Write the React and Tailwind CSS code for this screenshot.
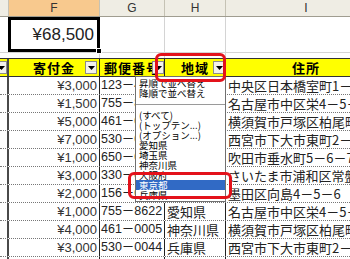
import React from "react";

// Excel-style donation sheet with an autofilter dropdown open on 地域
const rows = [
  { amount: "¥3,000", zip: "123－4567", pref: "東京都", addr: "中央区日本橋室町1－2－3" },
  { amount: "¥1,500", zip: "755－8622", pref: "愛知県", addr: "名古屋市中区栄4－5－6" },
  { amount: "¥5,000", zip: "461－0005", pref: "神奈川県", addr: "横須賀市戸塚区柏尾町" },
  { amount: "¥7,000", zip: "530－0044", pref: "兵庫県", addr: "西宮市下大市東町2－3" },
  { amount: "¥1,000", zip: "650－0012", pref: "大阪府", addr: "吹田市垂水町5－6－7" },
  { amount: "¥3,000", zip: "330－0046", pref: "埼玉県", addr: "さいたま市浦和区常盤" },
  { amount: "¥2,000", zip: "156－0034", pref: "東京都", addr: "墨田区向島4－5－6" },
  { amount: "¥1,000", zip: "755－8622", pref: "愛知県", addr: "名古屋市中区栄4－5－6" },
  { amount: "¥4,000", zip: "461－0005", pref: "神奈川県", addr: "横須賀市戸塚区柏尾町" },
  { amount: "¥3,000", zip: "530－0044", pref: "兵庫県", addr: "西宮市下大市東町2－3" },
];

const filterItems = [
  "(すべて)",
  "(トップテン...)",
  "(オプション...)",
  "愛知県",
  "埼玉県",
  "神奈川県",
  "大阪府",
  "東京都",
  "兵庫県",
];

const Arrow = () => (
  <svg width="7" height="4" viewBox="0 0 7 4">
    <path d="M0 0h7L3.5 4z" fill="#000" />
  </svg>
);

const FilterButton = ({ className = "" }) => (
  <div
    className={
      "absolute top-[2px] h-[13px] w-[12px] flex items-center justify-center bg-[#f3f2ec] border border-[#8c8c8c] " +
      className
    }
  >
    <Arrow />
  </div>
);

const App = () => {
  return (
    <div className="relative w-[350px] h-[259px] overflow-hidden bg-white text-[#222] font-['Liberation_Sans','Noto_Sans_CJK_JP',sans-serif]">
      {/* column letters */}
      <div className="flex h-[17px] border-b border-[#a09d90] bg-[#efede4] text-[12px] leading-[16px] text-[#333]">
        <div className="w-[9px] shrink-0 border-r border-[#c5c2b4]" />
        <div className="w-[91px] shrink-0 border-r border-[#c5c2b4] bg-[#f8c98e] text-center">F</div>
        <div className="w-[65px] shrink-0 border-r border-[#c5c2b4] text-center">G</div>
        <div className="w-[61px] shrink-0 border-r border-[#c5c2b4] text-center">H</div>
        <div className="w-[160px] shrink-0 text-center">I</div>
      </div>

      {/* total row */}
      <div className="flex h-[36px] border-b border-[#d4d4d4]">
        <div className="w-[8px] shrink-0" />
        <div className="relative w-[92px] shrink-0 flex items-center justify-end pr-[3px] border-[3px] border-black text-[17px] text-[#222]">
          ¥68,500
          <div className="absolute -right-[5px] -bottom-[5px] w-[6px] h-[6px] bg-black border border-white" />
        </div>
        <div className="w-[65px] shrink-0 border-r border-[#d4d4d4]" />
        <div className="w-[61px] shrink-0 border-r border-[#d4d4d4]" />
        <div className="w-[160px] shrink-0" />
      </div>

      {/* spacer row */}
      <div className="flex h-[5px]">
        <div className="w-[9px] shrink-0" />
        <div className="w-[91px] shrink-0 border-r border-[#d4d4d4]" />
        <div className="w-[65px] shrink-0 border-r border-[#d4d4d4]" />
        <div className="w-[61px] shrink-0 border-r border-[#d4d4d4]" />
      </div>

      {/* yellow header row */}
      <div className="flex h-[19px] border-y border-[#333] bg-[#ffff00] text-[13px] leading-[17px] font-bold text-black font-['Noto_Sans_CJK_JP',sans-serif]">
        <div className="relative w-[9px] shrink-0 overflow-hidden border-r-2 border-[#4a4a4a]">
          <FilterButton className="right-[0px]" />
        </div>
        <div className="relative w-[91px] shrink-0 border-r border-[#222] text-center tracking-[1px]">
          寄付金
          <FilterButton className="right-[2px]" />
        </div>
        <div className="relative w-[65px] shrink-0 border-r border-[#222] text-center tracking-[1px] whitespace-nowrap overflow-hidden">
          郵便番号
          <FilterButton className="right-[0px]" />
        </div>
        <div className="relative w-[61px] shrink-0 border-r border-[#222] text-center tracking-[1px]">
          地域
          <FilterButton className="right-[0px]" />
        </div>
        <div className="w-[160px] shrink-0 text-center tracking-[1px]">住所</div>
      </div>

      {/* data rows */}
      {[...rows, null].map((r, i) => (
        <div
          key={i}
          className="flex h-[18px] border-b border-dotted border-[#777] text-[13px] leading-[17px] whitespace-nowrap"
        >
          <div className="w-[9px] shrink-0 border-r-2 border-[#4a4a4a]" />
          <div className="w-[91px] shrink-0 border-r border-[#222] text-right pr-[2px] text-[#333]">
            {r && r.amount}
          </div>
          <div className="w-[65px] shrink-0 overflow-hidden border-r border-[#222] pl-[1px] text-[12.5px] text-[#222]">
            {r && r.zip}
          </div>
          <div className="w-[61px] shrink-0 overflow-hidden border-r border-[#222] pl-[2px] font-['Noto_Sans_CJK_JP',sans-serif]">
            {r && r.pref}
          </div>
          <div className="w-[160px] shrink-0 overflow-hidden pl-[2px] font-['Noto_Sans_CJK_JP',sans-serif]">
            {r && r.addr}
          </div>
        </div>
      ))}

      {/* autofilter dropdown */}
      <div className="absolute left-[135px] top-[76px] w-[91px] h-[126px] overflow-hidden bg-white border border-[#707070] pt-[1px] text-[9.5px] leading-[10px] text-black whitespace-nowrap font-['Noto_Sans_CJK_JP',sans-serif]">
        <div className="h-[10px] pl-[3px]">昇順で並べ替え</div>
        <div className="h-[10px] pl-[3px]">降順で並べ替え</div>
        <div className="h-[12px] flex items-center">
          <div className="h-px w-full bg-[#9a9a9a]" />
        </div>
        {filterItems.map((item) => (
          <div
            key={item}
            className={
              item === "東京都"
                ? "h-[10px] pl-[3px] bg-[#316ac5] text-white"
                : "h-[10px] pl-[3px]"
            }
          >
            {item}
          </div>
        ))}
      </div>

      {/* red callouts */}
      <div className="absolute left-[155px] top-[53px] w-[71px] h-[29px] rounded-[6px] border-[3px] border-[#e3121b]" />
      <div className="absolute left-[128px] top-[172px] w-[104px] h-[27px] rounded-[6px] border-[3px] border-[#e3121b]" />
    </div>
  );
};

export default App;
